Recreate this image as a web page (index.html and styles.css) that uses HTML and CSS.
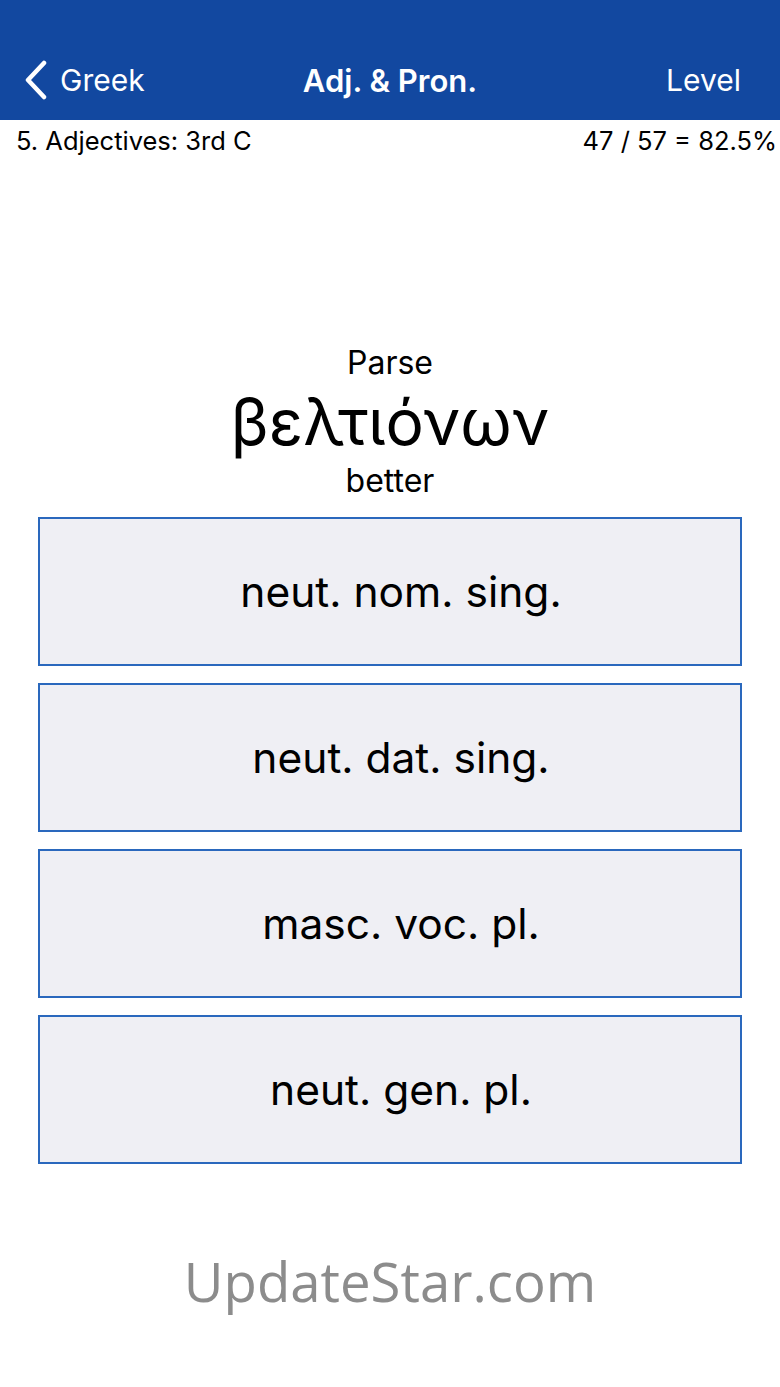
FILE: index.html
```html
<!DOCTYPE html>
<html>
<head>
<meta charset="utf-8">
<link rel="stylesheet" href="styles.css">
</head>
<body>
<header class="nav">
  <div class="nav-row">
    <div class="back">
      <svg class="chev" width="24" height="40" viewBox="0 0 24 40"><path d="M20 3 L4 20 L20 37" fill="none" stroke="#fff" stroke-width="4.5" stroke-linecap="round" stroke-linejoin="round"/></svg>
      <span>Greek</span>
    </div>
    <div class="title">Adj. &amp; Pron.</div>
    <div class="level">Level</div>
  </div>
</header>
<div class="sub">
  <span>5. Adjectives: 3rd C</span>
  <span>47 / 57 = 82.5%</span>
</div>
<main class="quiz">
  <div class="prompt">Parse</div>
  <div class="word">βελτιόνων</div>
  <div class="gloss">better</div>
  <div class="choices">
    <div class="choice">neut. nom. sing.</div>
    <div class="choice">neut. dat. sing.</div>
    <div class="choice">masc. voc. pl.</div>
    <div class="choice">neut. gen. pl.</div>
  </div>
</main>
<footer class="brand">UpdateStar.com</footer>
</body>
</html>
```
FILE: styles.css
```css
html, body { margin: 0; padding: 0; background: #fff; }
body { width: 780px; height: 1387px; font-family: Inter, "Noto Sans", "DejaVu Sans", sans-serif; color: #000; overflow: hidden; }
.nav { background: #1248a0; height: 120px; padding-top: 40px; box-sizing: border-box; }
.nav-row { height: 80px; display: flex; align-items: center; justify-content: space-between; position: relative; color: #fff; font-size: 30px; padding: 0 39px 0 24px; }
.back { display: flex; align-items: center; gap: 12px; }
.chev { display: block; }
.title { position: absolute; left: 0; right: 0; text-align: center; font-weight: 600; font-size: 31px; pointer-events: none; }
.sub { display: flex; justify-content: space-between; padding: 0 3px 0 16px; height: 40px; align-items: center; font-size: 25.5px; }
.quiz { display: flex; flex-direction: column; align-items: center; padding-top: 185px; }
.prompt { font-size: 32px; line-height: 36px; }
.word { font-size: 64px; line-height: 82px; }
.gloss { font-size: 32px; line-height: 36px; }
.choices { display: flex; flex-direction: column; gap: 17px; margin-top: 18px; width: 704px; }
.choice { height: 149px; box-sizing: border-box; border: 2px solid #2a68bd; background: #efeff4; display: flex; align-items: center; justify-content: center; font-size: 42.5px; padding-left: 22px; }
.brand { text-align: center; margin-top: 80px; font-family: "Open Sans", sans-serif; font-size: 54.5px; color: #8c8c8c; }
```
